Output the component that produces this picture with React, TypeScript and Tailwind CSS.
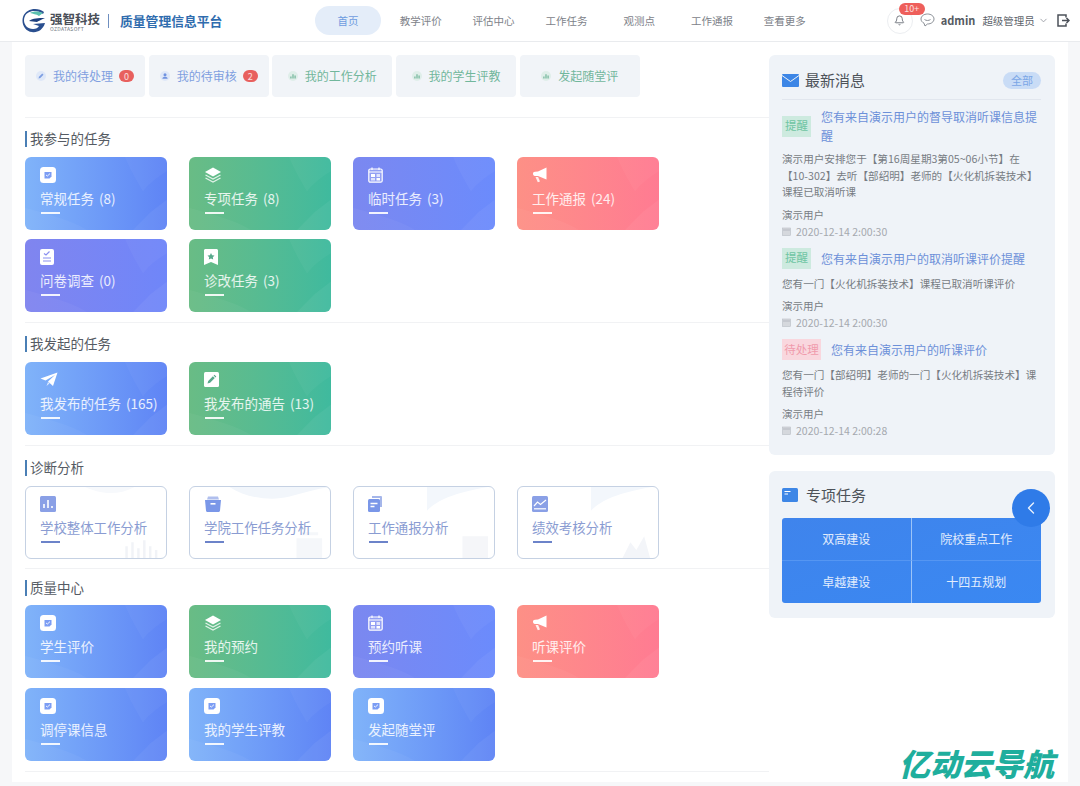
import React from "react";
import { Bell, ChevronDown, ChevronLeft } from "lucide-react";

type Tone = "blue" | "green" | "indigo" | "purple" | "red";
type IconName = "note" | "layers" | "calendar" | "horn" | "survey" | "ribbon" | "plane" | "pencil";

const TONES: Record<Tone, string> = {
  blue: "bg-gradient-to-r from-[#80b3f9] to-[#5f84f5]",
  green: "bg-gradient-to-r from-[#69bc85] to-[#3fba9e]",
  indigo: "bg-gradient-to-r from-[#7b88f0] to-[#6b8bfc]",
  purple: "bg-gradient-to-r from-[#8085ef] to-[#6f86f9]",
  red: "bg-gradient-to-r from-[#fd9086] to-[#ff7b92]",
};

const NAV = ["首页", "教学评价", "评估中心", "工作任务", "观测点", "工作通报", "查看更多"];

const TABS = [
  { label: "我的待处理", icon: "edit", badge: "0" },
  { label: "我的待审核", icon: "user", badge: "2" },
  { label: "我的工作分析", icon: "chart" },
  { label: "我的学生评教", icon: "chart" },
  { label: "发起随堂评", icon: "chart" },
];

const SECTIONS: { title: string; cards: { label: string; tone: Tone; icon: IconName }[] }[] = [
  {
    title: "我参与的任务",
    cards: [
      { label: "常规任务 (8)", tone: "blue", icon: "note" },
      { label: "专项任务 (8)", tone: "green", icon: "layers" },
      { label: "临时任务 (3)", tone: "indigo", icon: "calendar" },
      { label: "工作通报 (24)", tone: "red", icon: "horn" },
      { label: "问卷调查 (0)", tone: "purple", icon: "survey" },
      { label: "诊改任务 (3)", tone: "green", icon: "ribbon" },
    ],
  },
  {
    title: "我发起的任务",
    cards: [
      { label: "我发布的任务 (165)", tone: "blue", icon: "plane" },
      { label: "我发布的通告 (13)", tone: "green", icon: "pencil" },
    ],
  },
];

const QUALITY: { label: string; tone: Tone; icon: IconName }[] = [
  { label: "学生评价", tone: "blue", icon: "note" },
  { label: "我的预约", tone: "green", icon: "layers" },
  { label: "预约听课", tone: "indigo", icon: "calendar" },
  { label: "听课评价", tone: "red", icon: "horn" },
  { label: "调停课信息", tone: "blue", icon: "note" },
  { label: "我的学生评教", tone: "blue", icon: "note" },
  { label: "发起随堂评", tone: "blue", icon: "note" },
];

const ANALYSIS = ["学校整体工作分析", "学院工作任务分析", "工作通报分析", "绩效考核分析"];

const NEWS = [
  {
    tag: "提醒",
    title: "您有来自演示用户的督导取消听课信息提醒",
    body: ["演示用户安排您于【第16周星期3第05~06小节】在", "【10-302】去听【部绍明】老师的【火化机拆装技术】", "课程已取消听课"],
    time: "2020-12-14 2:00:30",
  },
  {
    tag: "提醒",
    title: "您有来自演示用户的取消听课评价提醒",
    body: ["您有一门【火化机拆装技术】课程已取消听课评价"],
    time: "2020-12-14 2:00:30",
  },
  {
    tag: "待处理",
    title: "您有来自演示用户的听课评价",
    body: ["您有一门【部绍明】老师的一门【火化机拆装技术】课", "程待评价"],
    time: "2020-12-14 2:00:28",
  },
];

function CardIcon({ name }: { name: IconName }) {
  if (name === "layers")
    return (
      <svg width="18" height="16" viewBox="0 0 18 16" fill="none">
        <path d="M9 0.500 17 5 9 9.500 1 5Z" fill="#fff" />
        <path d="M1.500 8 9 12 16.500 8M1.500 11 9 15 16.500 11" stroke="#fff" strokeOpacity="0.8" strokeWidth="1.200" />
      </svg>
    );
  if (name === "calendar")
    return (
      <svg width="15" height="16" viewBox="0 0 15 16" fill="none">
        <rect x="0.800" y="2" width="13.400" height="13.200" rx="1.500" fill="#ffffff" fillOpacity="0.2" stroke="#fff" strokeWidth="1.200" />
        <path d="M4 0.500V3M11 0.500V3M1 5h13" stroke="#fff" strokeWidth="1.200" />
        <rect x="3" y="7" width="4" height="3" fill="#fff" />
        <rect x="8.500" y="7" width="3.500" height="3" fill="#fff" fillOpacity="0.7" />
        <rect x="3" y="11" width="4" height="2.500" fill="#fff" fillOpacity="0.7" />
        <rect x="8.500" y="11" width="3.500" height="2.500" fill="#fff" />
      </svg>
    );
  if (name === "horn")
    return (
      <svg width="16" height="16" viewBox="0 0 16 16" fill="#fff">
        <path d="M14.500 0.500V12.500L6 9H3C1.600 9 1 8 1 6.800 1 5.500 1.600 5 3 4.800L6 4.600Z" />
        <path d="M3.500 10h2.600L8 14.500l-2.200.8Z" fillOpacity="0.85" />
      </svg>
    );
  if (name === "survey")
    return (
      <svg width="14" height="16" viewBox="0 0 14 16" fill="none">
        <rect width="14" height="16" rx="2" fill="#fff" />
        <path d="M4 4.500 6 6 9.500 2.500" stroke="#8a8ff0" strokeWidth="1.200" />
        <path d="M3 9h8M3 12h8" stroke="#8a8ff0" strokeWidth="1.200" />
      </svg>
    );
  if (name === "ribbon")
    return (
      <svg width="14" height="16" viewBox="0 0 14 16">
        <path d="M0 1.500C0 .7.7 0 1.500 0h11c.8 0 1.500.7 1.500 1.500V16L7 13 0 16Z" fill="#fff" />
        <path d="M7 4l1.100 2.200 2.400.3-1.700 1.700.4 2.400L7 9.500l-2.200 1.100.4-2.400-1.700-1.700 2.400-.3Z" fill="#58a98c" />
      </svg>
    );
  if (name === "plane")
    return (
      <svg width="18" height="15" viewBox="0 0 18 15" fill="#fff">
        <path d="M17.500 0.500 13 14 8 9.500 15 3 5.500 8.500 0.500 6.500Z" />
        <path d="M8 10l-1.500 4 3-2.500Z" fillOpacity="0.75" />
      </svg>
    );
  if (name === "pencil")
    return (
      <svg width="15" height="15" viewBox="0 0 15 15">
        <rect width="15" height="15" rx="1.500" fill="#fff" />
        <path d="M3.500 11.500l.7-2.600 4.700-4.700 1.900 1.900-4.700 4.700ZM9.600 3.500l.8-.8 1.900 1.900-.8.8Z" fill="#5aa98d" />
      </svg>
    );
  return (
    <svg width="16" height="16" viewBox="0 0 16 16">
      <rect width="16" height="16" rx="3.500" fill="#fff" />
      <path d="M4.500 5h7v4.500L9.500 11.500h-5Z" fill="#7c9df4" />
      <path d="M6 8l1.400 1L10 6.600" stroke="#fff" strokeWidth="0.900" fill="none" />
    </svg>
  );
}

function Wave() {
  return (
    <svg className="absolute inset-0 h-full w-full" viewBox="0 0 142 72" preserveAspectRatio="none">
      <path d="M100 0C106 14 112 24 118 34 124 26 132 20 142 14V0Z" fill="#fff" fillOpacity="0.035" />
      <path d="M108 72 126 54 142 42V72Z" fill="#fff" fillOpacity="0.05" />
      <path d="M0 50C28 58 46 62 62 72H0Z" fill="#fff" fillOpacity="0.04" />
    </svg>
  );
}

function TaskCard({ label, tone, icon }: { label: string; tone: Tone; icon: IconName }) {
  return (
    <div className={`relative h-[73px] w-[142px] overflow-hidden rounded-md ${TONES[tone]}`}>
      <Wave />
      <div className="relative flex h-full flex-col pl-[15px] pt-[9px] text-white">
        <div className="flex h-[17px] items-center">
          <CardIcon name={icon} />
        </div>
        <div className="mt-[4px] whitespace-nowrap text-[13.500px] leading-[22px] text-white/85 [word-spacing:2px]">{label}</div>
        <div className="ml-[1px] mt-[3px] h-[2px] w-[19px] bg-white/90" />
      </div>
    </div>
  );
}

function AnalysisIcon({ index }: { index: number }) {
  if (index === 0)
    return (
      <svg width="16" height="16" viewBox="0 0 16 16">
        <rect width="16" height="16" rx="1.500" fill="#8aa0e6" />
        <path d="M4 8v4M8 4v8M12 10v2" stroke="#fff" strokeWidth="1.600" />
      </svg>
    );
  if (index === 1)
    return (
      <svg width="18" height="16" viewBox="0 0 18 16">
        <path d="M4 0.500h10l1 3H3Z" fill="#b0bfee" />
        <path d="M1 4h16l-1 10.500c0 .8-.7 1.500-1.500 1.500h-11C2.700 16 2 15.300 2 14.500Z" fill="#7a97e8" />
        <rect x="6.500" y="7" width="5" height="1.600" fill="#fff" />
      </svg>
    );
  if (index === 2)
    return (
      <svg width="14" height="16" viewBox="0 0 14 16">
        <path d="M4 0h9a1 1 0 0 1 1 1v10h-2V2H4Z" fill="#a5b6ea" />
        <rect y="3" width="12" height="13" rx="1.500" fill="#7a97e8" />
        <path d="M2.500 7.500h7M2.500 10.500h4" stroke="#fff" strokeWidth="1.300" />
      </svg>
    );
  return (
    <svg width="16" height="16" viewBox="0 0 16 16" fill="none">
      <rect width="16" height="16" rx="1.500" fill="#8aa0e6" />
      <path d="M2 10l3.500-4 3 2.500L14 4" stroke="#fff" strokeWidth="1.200" />
      <rect x="2" y="12" width="12" height="1.500" fill="#fff" fillOpacity="0.8" />
    </svg>
  );
}

// 卡片右下角的淡色水印图形
function AnalysisBackdrop({ index }: { index: number }) {
  return (
    <svg className="absolute inset-0 h-full w-full" viewBox="0 0 142 72" preserveAspectRatio="none">
      {index === 0 && (
        <>
          <path d="M60 0C72 6 92 10 110 0Z" fill="#f7f9fc" />
          <path d="M102 72V60M108 72V56M114 72V62M120 72V54M126 72V60M132 72V64" stroke="#f1f3f7" strokeWidth="2.500" />
        </>
      )}
      {index === 1 && (
        <>
          <path d="M40 0C58 12 84 14 100 10 114 6 128 2 142 0Z" fill="#f2f6fb" />
          <path d="M108 52h26v20h-26Z" fill="#f5f7fa" />
          <path d="M112 46h18v3h-18Z" fill="#f5f7fa" />
        </>
      )}
      {index === 2 && (
        <>
          <path d="M74 24C84 14 100 6 136 0H74Z" fill="#f3f7fc" />
          <path d="M110 50h26v22h-26Z" fill="#f5f6f9" />
        </>
      )}
      {index === 3 && (
        <>
          <path d="M74 24C84 14 100 6 136 0H74Z" fill="#f3f7fc" />
          <path d="M106 72l8-16 6 8 8-14 6 22Z" fill="#f3f5f9" />
        </>
      )}
    </svg>
  );
}

function AnalysisCard({ label, index }: { label: string; index: number }) {
  return (
    <div className="relative h-[73px] w-[142px] overflow-hidden rounded-md border-[1.500px] border-[#c5d1e3] bg-white">
      <AnalysisBackdrop index={index} />
      <div className="relative flex h-full flex-col pl-[14px] pt-[8px]">
        <div className="flex h-[17px] items-center">
          <AnalysisIcon index={index} />
        </div>
        <div className="mt-[4px] whitespace-nowrap text-[13.400px] leading-[22px] text-[#8a9cd2]">{label}</div>
        <div className="ml-[1px] mt-[3px] h-[2px] w-[19px] bg-[#6c83c9]" />
      </div>
    </div>
  );
}

function SectionTitle({ title }: { title: string }) {
  return (
    <div className="flex h-[18px] items-center">
      <span className="h-[16px] w-[2px] bg-[#4a7fb5]" />
      <span className="-mt-[2px] ml-[3px] text-[13.500px] leading-[18px] text-[#555b63]">{title}</span>
    </div>
  );
}

function TabIcon({ kind }: { kind: string }) {
  if (kind === "edit")
    return (
      <svg width="10" height="10" viewBox="0 0 12 12">
        <circle cx="6" cy="6" r="6" fill="#dfe8f8" />
        <path d="M3 9l.6-2.200L7.500 3l1.500 1.500-3.800 3.900Z" fill="#7d9ee2" />
      </svg>
    );
  if (kind === "user")
    return (
      <svg width="10" height="10" viewBox="0 0 12 12">
        <circle cx="6" cy="6" r="6" fill="#dfe8f8" />
        <circle cx="6" cy="4.500" r="1.800" fill="#7092e0" />
        <path d="M2.800 9.200C3 7.500 4.500 7 6 7s3 .5 3.200 2.200Z" fill="#7092e0" />
      </svg>
    );
  return (
    <svg width="10" height="10" viewBox="0 0 12 12">
      <circle cx="6" cy="6" r="6" fill="#dfeee9" />
      <path d="M3.500 6.500v2.500M6 4v5M8.500 5.500V9" stroke="#6cb396" strokeWidth="1.400" />
    </svg>
  );
}

function NewsItem({ tag, title, body, time, first }: { tag: string; title: string; body: string[]; time: string; first: boolean }) {
  const pending = tag === "待处理";
  return (
    <div className={first ? "mt-[7px]" : "mt-[8px]"}>
      <div className="flex items-center">
        <span
          className={`flex h-[21px] shrink-0 items-center justify-center text-[11.500px] ${
            pending ? "w-[39px] bg-[#f9d7de] text-[#f09bac]" : "w-[29px] bg-[#cdeadf] text-[#6fc5a3]"
          }`}
        >
          {tag}
        </span>
        <span className="ml-[10px] w-[218px] text-[12px] leading-[19px] text-[#6c90d9]">{title}</span>
      </div>
      <div className={`text-[10.600px] leading-[16.500px] text-[#777c83] ${first ? "mt-[6px]" : "mt-[7px]"}`}>
        {body.map((line) => (
          <div key={line} className="whitespace-nowrap">
            {line}
          </div>
        ))}
      </div>
      <div className="mt-[6px] text-[10.500px] leading-[16px] text-[#777c83]">演示用户</div>
      <div className="flex items-center text-[10.500px] leading-[17px] text-[#a5a9af]">
        <svg width="9" height="9" viewBox="0 0 9 9" className="mr-[5px]">
          <rect x="0.500" y="1" width="8" height="7.500" fill="#d5d8dd" stroke="#b8bcc3" strokeWidth="0.600" />
          <path d="M1 3h7" stroke="#a9adb5" strokeWidth="0.700" />
        </svg>
        {time}
      </div>
    </div>
  );
}

export default function App() {
  const font = { fontFamily: '"Noto Sans CJK SC", "Noto Sans", "Liberation Sans", sans-serif' };
  return (
    <div className="relative flex h-[786px] w-[1080px] flex-col overflow-hidden bg-[#f6f7f9]" style={font}>
      {/* 顶部导航 */}
      <header className="flex h-[42px] shrink-0 items-center border-b border-[#e9ebee] bg-white">
        <div className="ml-[22px] flex w-[293px] items-center">
          <svg width="25" height="24" viewBox="0 0 25 24" fill="none">
            <path d="M21 5C16 .5 6 1 3 7c-3 6 1 13 8 13 3 0 5-1 6-3l-6-2 12-1c-2 7-8 10-13 9C3 22-1 15 1 8 4-1 16-2 22 3Z" fill="#2a4f8f" />
            <path d="M8 4c3-2 9-2 13 0l-4 3C14 5 11 5 8 4Z" fill="#5cc0b0" />
            <path d="M7 12c4-3 9-3 16-3-4 2-7 3-8 4l-8-1Z" fill="#1d3f7d" />
          </svg>
          <div className="ml-[3px] mt-[2px] flex w-[50px] flex-col">
            <span className="whitespace-nowrap text-[12.500px] font-bold leading-[13px] text-[#4a4f58]">强智科技</span>
            <span className="mt-[1px] text-[5px] leading-[6px] tracking-[0.300px] text-[#6f7680]">OZDATASOFT</span>
          </div>
          <span className="ml-[8px] h-[14px] w-[1px] bg-[#6f8fc0]" />
          <span className="ml-[11px] whitespace-nowrap text-[12.800px] font-bold text-[#2f6cae]">质量管理信息平台</span>
        </div>
        <nav className="flex gap-[6.800px]">
          {NAV.map((item, i) => (
            <span
              key={item}
              className={`flex h-[29px] w-[66px] items-center justify-center rounded-full text-[10.500px] ${
                i === 0 ? "bg-[#e4edf9] text-[#6e9ce0]" : "text-[#7d8289]"
              }`}
            >
              {item}
            </span>
          ))}
        </nav>
        <div className="relative ml-[69px] flex h-[26px] w-[26px] shrink-0 items-center justify-center rounded-full border border-[#eceef1]">
          <Bell size={11} className="text-[#6b7078]" />
          <span className="absolute left-[11px] top-[-6px] flex h-[12px] w-[26px] items-center justify-center rounded-full bg-[#ee5f5b] text-[9px] text-white/80">
            10+
          </span>
        </div>
        <svg width="15" height="15" viewBox="0 0 15 15" fill="none" className="ml-[7px] shrink-0">
          <path d="M7.500 1C3.800 1 1 3.200 1 6c0 1.800 1.200 3.300 3 4.200L5 13l2.500-2C11.200 11 14 8.800 14 6S11.200 1 7.500 1Z" stroke="#8b9097" strokeWidth="1" />
          <path d="M4.500 6.500c1.500 1.300 4.500 1.300 6 0" stroke="#8b9097" strokeWidth="1" />
        </svg>
        <span className="ml-[6px] whitespace-nowrap text-[11px] font-bold text-[#555a62]">admin</span>
        <span className="ml-[7px] whitespace-nowrap text-[10.500px] text-[#60656c]">超级管理员</span>
        <ChevronDown size={11} className="ml-[3px] shrink-0 text-[#9a9ea5]" />
        <svg width="13" height="13" viewBox="0 0 13 13" fill="none" className="ml-[8px] shrink-0">
          <path d="M9 3.500V1H1v11h8V9.500" stroke="#4c5159" strokeWidth="1.500" />
          <path d="M5 6.500h7M9.500 4l2.500 2.500L9.500 9" stroke="#4c5159" strokeWidth="1.500" />
        </svg>
      </header>

      <main className="mx-[12px] flex h-[740px] bg-white pl-[13px] pt-[13px]">
        {/* 左侧任务区 */}
        <div className="w-[744px] shrink-0">
          <div className="flex gap-[3.700px]">
            {TABS.map((tab) => {
              const green = tab.icon === "chart";
              return (
                <div key={tab.label} className="flex h-[42px] w-[120px] items-center justify-center rounded-[4px] bg-[#f1f4f8]">
                  <TabIcon kind={tab.icon} />
                  <span className={`ml-[7px] whitespace-nowrap text-[12px] ${green ? "text-[#71b79c]" : "text-[#7f9fe0]"}`}>{tab.label}</span>
                  {tab.badge && (
                    <span className="ml-[6px] flex h-[12px] w-[15px] items-center justify-center rounded-full bg-[#e8605e] text-[9px] leading-none text-white/80">
                      {tab.badge}
                    </span>
                  )}
                </div>
              );
            })}
          </div>
          <div className="mt-[20px] h-[1px] bg-[#f1f2f4]" />

          {SECTIONS.map((section) => (
            <section key={section.title} className="border-b border-[#f1f2f4] pb-[10px] pt-[12px]">
              <SectionTitle title={section.title} />
              <div className="mt-[9px] grid grid-cols-[repeat(4,142px)] gap-x-[22px] gap-y-[9px]">
                {section.cards.map((card) => (
                  <TaskCard key={card.label} {...card} />
                ))}
              </div>
            </section>
          ))}

          <section className="border-b border-[#f1f2f4] pb-[9px] pt-[13px]">
            <SectionTitle title="诊断分析" />
            <div className="mt-[9px] grid grid-cols-[repeat(4,142px)] gap-x-[22px]">
              {ANALYSIS.map((label, i) => (
                <AnalysisCard key={label} label={label} index={i} />
              ))}
            </div>
          </section>

          <section className="border-b border-[#f1f2f4] pb-[10px] pt-[10px]">
            <SectionTitle title="质量中心" />
            <div className="mt-[8px] grid grid-cols-[repeat(4,142px)] gap-x-[22px] gap-y-[10px]">
              {QUALITY.map((card) => (
                <TaskCard key={card.label} {...card} />
              ))}
            </div>
          </section>
        </div>

        {/* 右侧消息区 */}
        <aside className="w-[286px] shrink-0">
          <div className="h-[400px] rounded-md bg-[#eff3f8] pl-[13px] pr-[14px] pt-[15px]">
            <div className="flex h-[30px] items-start justify-between border-b border-[#e1e6ee]">
              <div className="flex items-center">
                <svg width="17" height="13" viewBox="0 0 17 13">
                  <rect width="17" height="13" rx="1" fill="#3d86e6" />
                  <path d="M0 1.500 8.500 7.500 17 1.500" stroke="#eff3f8" strokeWidth="1" fill="none" />
                </svg>
                <span className="-mt-[1px] ml-[6px] text-[15px] leading-[22px] text-[#4d5259]">最新消息</span>
              </div>
              <span className="mt-[2px] flex h-[17px] w-[38px] items-center justify-center rounded-full bg-[#c9dcf6] text-[11px] text-[#7ba6e6]">
                全部
              </span>
            </div>
            {NEWS.map((item, i) => (
              <NewsItem key={item.title} {...item} first={i === 0} />
            ))}
          </div>

          <div className="mt-[16px] h-[147px] rounded-md bg-[#eff3f8] pl-[13px] pr-[14px] pt-[13px]">
            <div className="flex h-[22px] items-center">
              <svg width="16" height="14" viewBox="0 0 16 14">
                <rect width="16" height="14" rx="1.500" fill="#3d86e6" />
                <path d="M2.500 3.500h6M2.500 6h3.500" stroke="#fff" strokeWidth="1.200" />
              </svg>
              <span className="ml-[8px] text-[15px] leading-[22px] text-[#4d5259]">专项任务</span>
            </div>
            <div className="mt-[12px] grid h-[85px] grid-cols-2 grid-rows-2 overflow-hidden rounded-[3px] bg-gradient-to-br from-[#3f84ec] to-[#3a88f2] text-[12px] text-white/85">
              <span className="flex items-center justify-center border-b border-r border-b-[#5596f2] border-r-[#9cc4f8]">双高建设</span>
              <span className="flex items-center justify-center border-b border-b-[#5596f2]">院校重点工作</span>
              <span className="flex items-center justify-center border-r border-r-[#9cc4f8]">卓越建设</span>
              <span className="flex items-center justify-center">十四五规划</span>
            </div>
          </div>
        </aside>
      </main>

      {/* 浮动按钮与水印 */}
      <div className="absolute left-[1012px] top-[489px] flex h-[38px] w-[38px] items-center justify-center rounded-full bg-[#2f7be8]">
        <ChevronLeft size={20} className="text-white/90" strokeWidth={1.600} />
      </div>
      <div className="absolute left-[899px] top-[743px] whitespace-nowrap text-[31px] font-black italic leading-[40px] text-[#1fae9d]">亿动云导航</div>
    </div>
  );
}
